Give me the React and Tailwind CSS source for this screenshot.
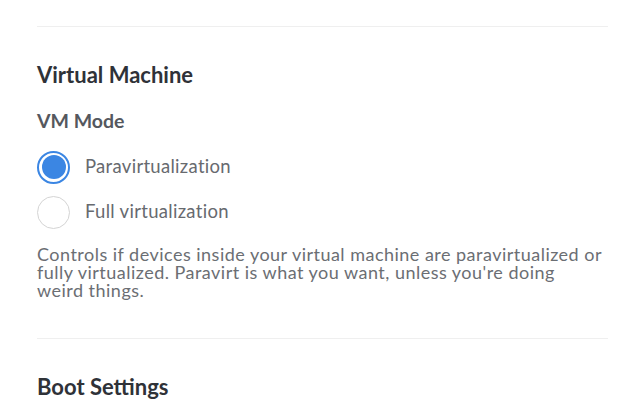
import React, { useState } from 'react';

const Radio = ({ checked, label, onClick }) => (
  <div className="flex items-center h-[45px] cursor-pointer" onClick={onClick}>
    <div
      className={
        checked
          ? "w-[33px] h-[33px] rounded-full border-2 border-[#3b86e3] flex items-center justify-center"
          : "w-[33px] h-[33px] rounded-full border-[1.5px] border-[#d4d4d4]"
      }
    >
      {checked && <div className="w-[24px] h-[24px] rounded-full bg-[#3b86e3]" />}
    </div>
    <span className="ml-[15px] text-[18.5px] tracking-[0.3px] text-[#676a6f]">{label}</span>
  </div>
);

export default function App() {
  const [mode, setMode] = useState('para');

  return (
    <div className="min-h-screen bg-white pl-[37px] pr-[32px] font-['Lato','Liberation_Sans',sans-serif]">
      <div className="pt-[26px]">
        <div className="border-t border-[#efefef]" />
      </div>

      <h2 className="mt-[35px] text-[22px] leading-[1.2] font-bold text-[#2f3238]">Virtual Machine</h2>
      <h3 className="mt-[21px] text-[19.5px] leading-[1.2] font-bold text-[#55585e]">VM Mode</h3>

      <div className="mt-[12px]">
        <Radio checked={mode === 'para'} label="Paravirtualization" onClick={() => setMode('para')} />
        <Radio checked={mode === 'full'} label="Full virtualization" onClick={() => setMode('full')} />
      </div>

      <p className="mt-[10px] max-w-[569px] text-[18px] tracking-[0.48px] leading-[18px] text-[#6b6e73]">
        Controls if devices inside your virtual machine are paravirtualized or fully virtualized. Paravirt is what you want, unless you're doing weird things.
      </p>

      <div className="mt-[39px] border-t border-[#efefef]" />

      <h2 className="mt-[35px] text-[22px] leading-[1.2] font-bold text-[#2f3238]">Boot Settings</h2>
    </div>
  );
}
